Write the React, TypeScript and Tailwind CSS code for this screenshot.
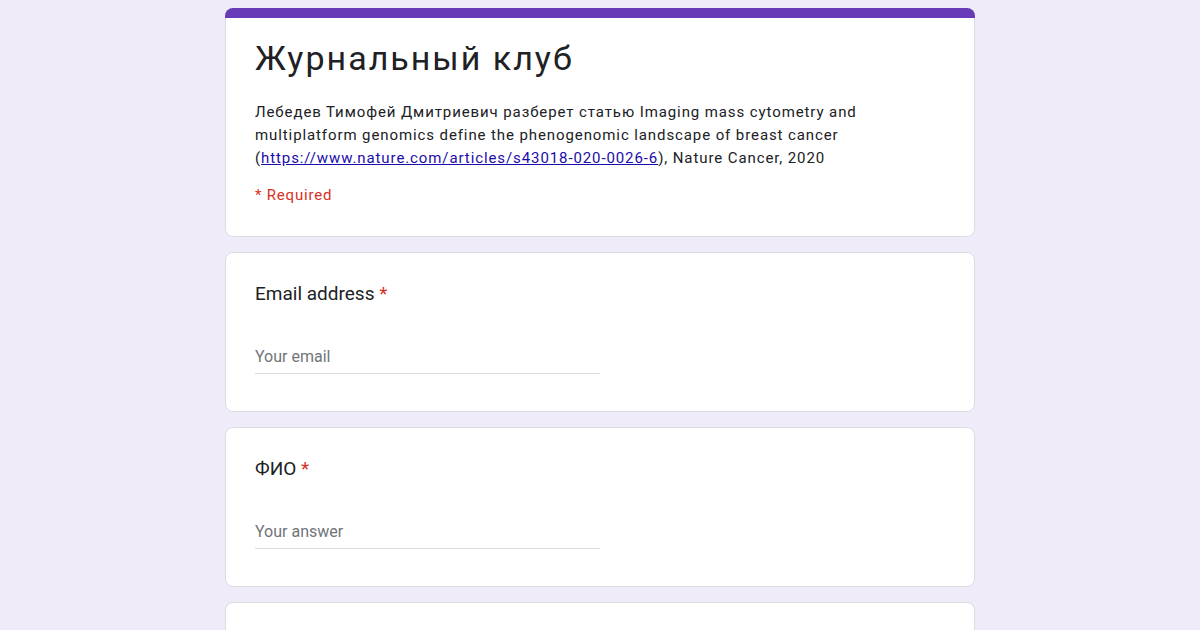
export default function App() {
  return (
    <div className="min-h-[630px] w-full bg-[#f0ebf8] font-['Roboto',sans-serif] text-[#202124]">
      <div className="mx-auto flex w-[750px] flex-col gap-[15px] pt-[8px]">
        {/* Header card */}
        <div className="overflow-hidden rounded-lg">
          <div className="h-[10px] bg-[#673ab7]" />
          <div className="rounded-b-lg border border-t-0 border-[#dadce0] bg-white px-[29px] pb-[31px] pt-[18px]">
            <h1 className="text-[34px] leading-[44px] tracking-[2px] text-[#202124]">Журнальный клуб</h1>
            <p className="mt-[21px] text-[15px] leading-[23px] tracking-[0.9px]">
              Лебедев Тимофей Дмитриевич разберет статью Imaging mass cytometry and
              <br />
              multiplatform genomics define the phenogenomic landscape of breast cancer
              <br />(
              <a href="#" className="text-[#1a0dab] underline">
                https://www.nature.com/articles/s43018-020-0026-6
              </a>
              ), Nature Cancer, 2020
            </p>
            <div className="mt-[15px] text-[15px] leading-[20px] tracking-[0.8px] text-[#d93025]">* Required</div>
          </div>
        </div>

        {/* Email */}
        <div className="h-[160px] rounded-lg border border-[#dadce0] bg-white px-[29px] pt-[29px]">
          <div className="text-[19px] leading-[24px]">
            Email address <span className="text-[#d93025]">*</span>
          </div>
          <div className="mt-[41px] w-[345px] border-b border-[#dadce0] pb-[6px] text-[16px] leading-[20px] text-[#70757a]">
            Your email
          </div>
        </div>

        {/* ФИО */}
        <div className="h-[160px] rounded-lg border border-[#dadce0] bg-white px-[29px] pt-[29px]">
          <div className="text-[19px] leading-[24px]">
            ФИО <span className="text-[#d93025]">*</span>
          </div>
          <div className="mt-[41px] w-[345px] border-b border-[#dadce0] pb-[6px] text-[16px] leading-[20px] text-[#70757a]">
            Your answer
          </div>
        </div>

        <div className="h-[100px] rounded-lg border border-[#dadce0] bg-white" />
      </div>
    </div>
  );
}
